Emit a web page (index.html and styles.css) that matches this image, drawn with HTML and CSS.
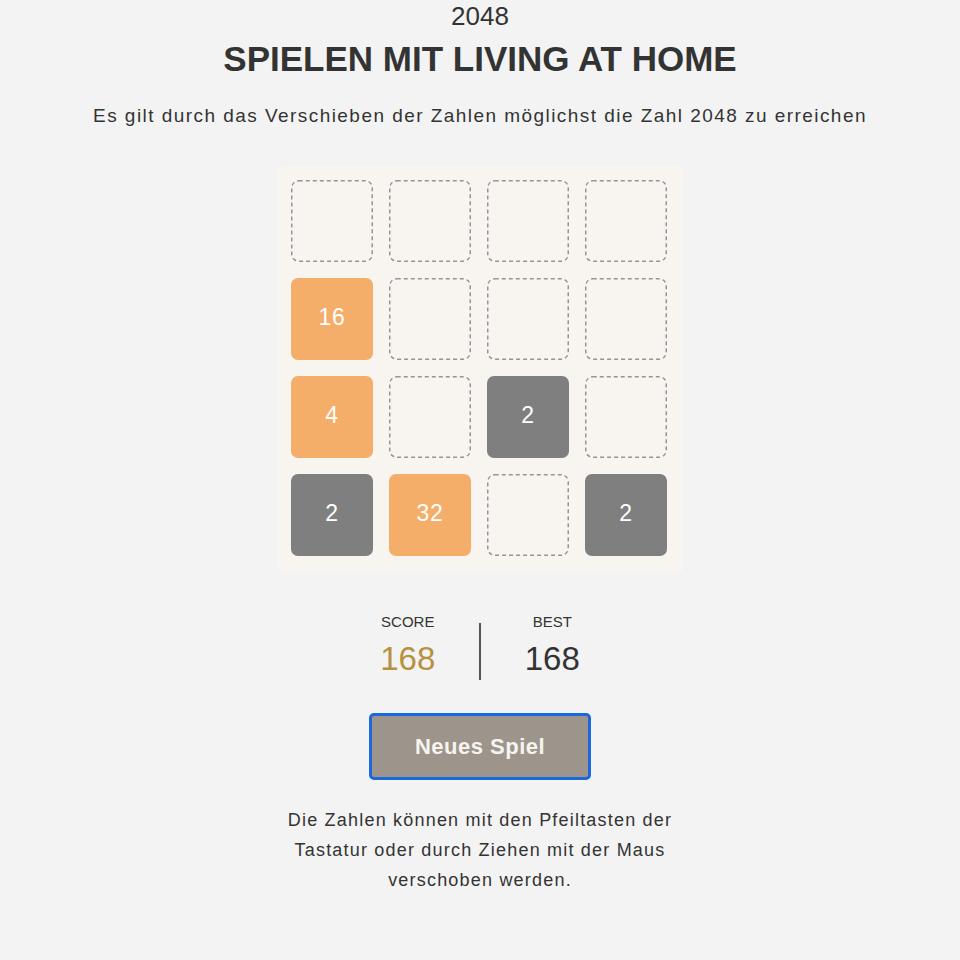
FILE: index.html
```html
<!DOCTYPE html>
<html lang="de">
<head>
    <meta charset="UTF-8">
    <meta name="viewport" content="width=device-width, initial-scale=1.0">
    <title>2048 - Spielen mit Living at Home</title>
    <link rel="stylesheet" href="styles.css">
</head>
<body>
    <header class="intro">
        <h1 class="game-title">2048</h1>
        <h2 class="headline">SPIELEN MIT LIVING AT HOME</h2>
        <p class="lead">Es gilt durch das Verschieben der Zahlen möglichst die Zahl 2048 zu erreichen</p>
    </header>

    <section class="game">
        <div class="board">
            <div class="cell"></div>
            <div class="cell"></div>
            <div class="cell"></div>
            <div class="cell"></div>

            <div class="cell tile orange">16</div>
            <div class="cell"></div>
            <div class="cell"></div>
            <div class="cell"></div>

            <div class="cell tile orange">4</div>
            <div class="cell"></div>
            <div class="cell tile grey">2</div>
            <div class="cell"></div>

            <div class="cell tile grey">2</div>
            <div class="cell tile orange">32</div>
            <div class="cell"></div>
            <div class="cell tile grey">2</div>
        </div>

        <div class="scores">
            <div class="score-box">
                <span class="score-label">SCORE</span>
                <span class="score-value current">168</span>
            </div>
            <div class="divider"></div>
            <div class="score-box">
                <span class="score-label">BEST</span>
                <span class="score-value">168</span>
            </div>
        </div>

        <button class="new-game">Neues Spiel</button>

        <p class="hint">Die Zahlen können mit den Pfeiltasten der Tastatur oder durch Ziehen mit der Maus verschoben werden.</p>
    </section>
</body>
</html>
```

FILE: styles.css
```css
* {
    box-sizing: border-box;
}

body {
    font-family: 'Liberation Sans', Arial, Helvetica, sans-serif;
    margin: 0;
    padding: 0;
    background: #f3f3f3;
    color: #333;
    text-align: center;
}

.intro {
    padding-top: 1px;
}

.game-title {
    font-size: 26px;
    font-weight: normal;
    line-height: 30px;
    margin: 0;
}

.headline {
    font-size: 35px;
    font-weight: bold;
    line-height: 40px;
    margin: 8px 0 0;
}

.lead {
    font-size: 19px;
    line-height: 24px;
    letter-spacing: 1.45px;
    margin: 25px 0 0;
}

.game {
    display: flex;
    flex-direction: column;
    align-items: center;
}

.board {
    margin-top: 38px;
    display: grid;
    grid-template-columns: repeat(4, 82px);
    grid-auto-rows: 82px;
    gap: 16px;
    padding: 14px 16px 17px 13px;
    background: #f8f5f0;
    border-radius: 3px;
}

/* empty slot: dashed rounded outline with longer dashes than a css border */
.cell {
    border-radius: 7px;
    background-image: url("data:image/svg+xml,%3Csvg xmlns='http://www.w3.org/2000/svg' width='82' height='82'%3E%3Crect x='0.75' y='0.75' width='80.5' height='80.5' rx='7' fill='none' stroke='%23959595' stroke-width='1.5' stroke-dasharray='4 3'/%3E%3C/svg%3E");
}

.tile {
    background-image: none;
    display: flex;
    align-items: center;
    justify-content: center;
    padding: 0 0 3px 1px;
    color: #fff;
    font-size: 23px;
    letter-spacing: 0.8px;
}

.orange { background-color: #f5ae6a; }
.grey { background-color: #7f7f7f; }

.scores {
    display: flex;
    align-items: flex-start;
    margin-top: 40px;
}

.score-box {
    display: flex;
    flex-direction: column;
    align-items: center;
    margin: 0 44px;
}

.score-label {
    font-size: 15px;
    line-height: 18px;
}

.score-value {
    font-size: 33px;
    line-height: 38px;
    margin-top: 9px;
}

.score-value.current {
    color: #b69142;
}

.divider {
    width: 1.5px;
    height: 57px;
    margin-top: 10px;
    background: #555;
}

.new-game {
    margin-top: 33px;
    width: 222px;
    height: 67px;
    font-family: inherit;
    font-size: 22px;
    font-weight: bold;
    letter-spacing: 0.5px;
    color: #f6f4f0;
    background: #9d958c;
    border: 3px solid #1a68dc;
    border-radius: 5px;
    cursor: pointer;
}

.hint {
    width: 420px;
    margin: 25px 0 0;
    font-size: 18px;
    line-height: 30px;
    letter-spacing: 1.2px;
}
```
